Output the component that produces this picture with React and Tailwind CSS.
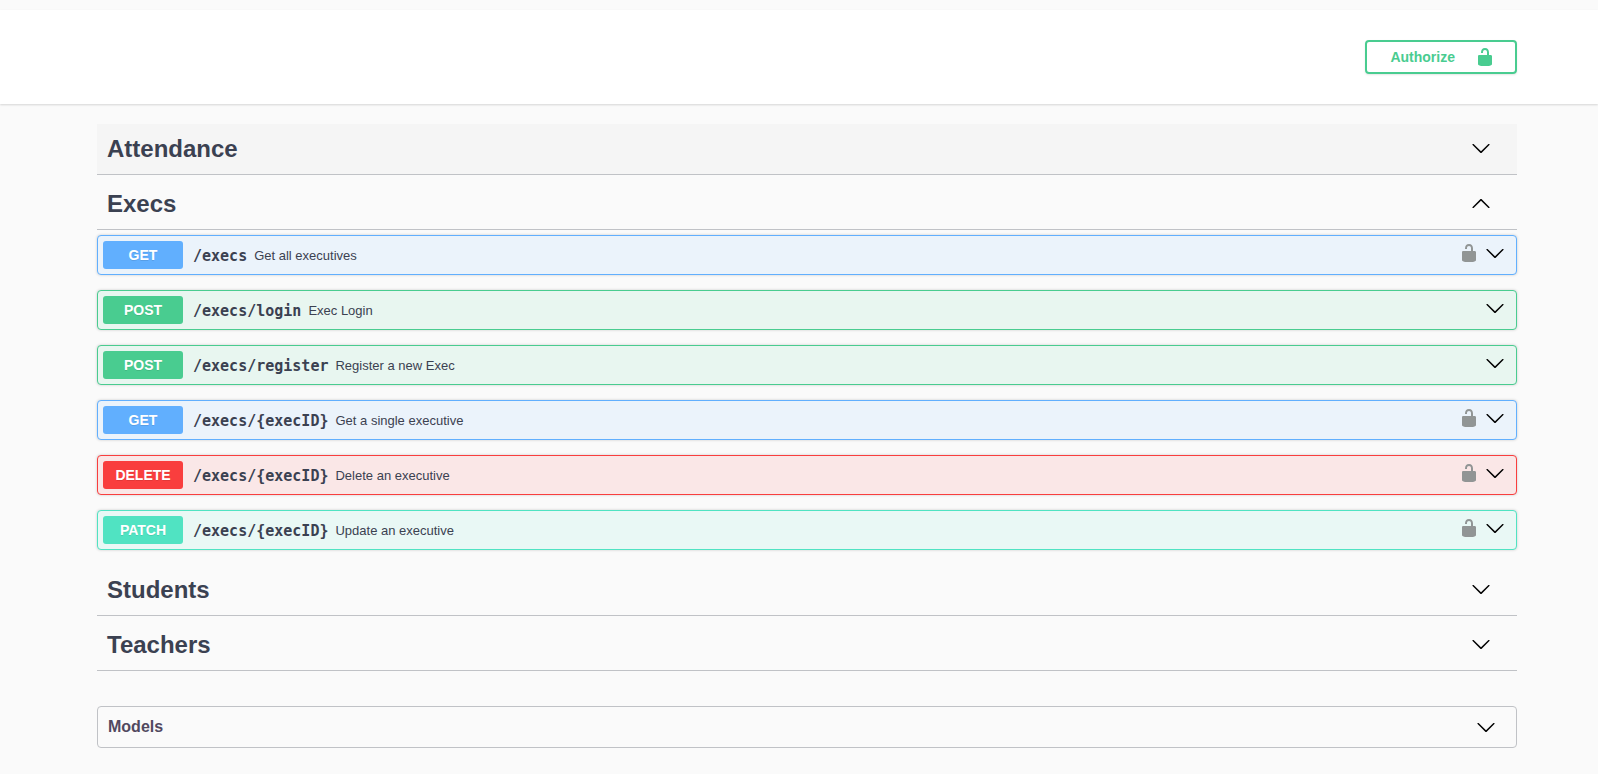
import { useState } from 'react';
import clsx from 'clsx';

const execOperations = [
  { method: 'GET', path: '/execs', summary: 'Get all executives', secured: true },
  { method: 'POST', path: '/execs/login', summary: 'Exec Login', secured: false },
  { method: 'POST', path: '/execs/register', summary: 'Register a new Exec', secured: false },
  { method: 'GET', path: '/execs/{execID}', summary: 'Get a single executive', secured: true },
  { method: 'DELETE', path: '/execs/{execID}', summary: 'Delete an executive', secured: true },
  { method: 'PATCH', path: '/execs/{execID}', summary: 'Update an executive', secured: true },
];

const tags = [
  { name: 'Attendance', operations: [], highlighted: true },
  { name: 'Execs', operations: execOperations },
  { name: 'Students', operations: [] },
  { name: 'Teachers', operations: [] },
];

const methodStyles = {
  GET: { block: 'border-[#61affe] bg-[#ebf3fb]', badge: 'bg-[#61affe]' },
  POST: { block: 'border-[#49cc90] bg-[#e8f6f0]', badge: 'bg-[#49cc90]' },
  DELETE: { block: 'border-[#f93e3e] bg-[#fae7e7]', badge: 'bg-[#f93e3e]' },
  PATCH: { block: 'border-[#50e3c2] bg-[#e9f8f5]', badge: 'bg-[#50e3c2]' },
};

function UnlockedIcon({ className }) {
  return (
    <svg className={clsx('size-5 shrink-0', className)} viewBox="0 0 20 20" fill="currentColor" aria-hidden="true">
      <path d="M15.8 8H14V5.6C14 2.703 12.665 1 10 1 7.334 1 6 2.703 6 5.6V6h2v-.801C8 3.754 8.797 3 10 3c1.203 0 2 .754 2 2.199V8H4c-.553 0-1 .646-1 1.199V17c0 .549.428 1.139.951 1.307l1.197.387C5.672 18.861 6.55 19 7.1 19h5.8c.549 0 1.428-.139 1.951-.307l1.196-.387c.524-.167.953-.757.953-1.306V9.199C17 8.646 16.352 8 15.8 8z" />
    </svg>
  );
}

function Arrow({ up }) {
  return (
    <svg className="size-5 shrink-0 text-black" viewBox="0 0 20 20" fill="currentColor" aria-hidden="true">
      {up ? (
        <path d="M17.418 14.908c.272.268.709.268.979 0s.271-.701 0-.969l-7.908-7.83c-.27-.268-.707-.268-.979 0l-7.908 7.83c-.27.268-.27.701 0 .969.271.268.709.268.979 0L10 7.767l7.418 7.141z" />
      ) : (
        <path d="M17.418 6.109c.272-.268.709-.268.979 0s.271.701 0 .969l-7.908 7.83c-.27.268-.707.268-.979 0l-7.908-7.83c-.27-.268-.27-.701 0-.969.271-.268.709-.268.979 0L10 13.25l7.418-7.141z" />
      )}
    </svg>
  );
}

function Operation({ method, path, summary, secured }) {
  const styles = methodStyles[method];

  return (
    <div className={clsx('flex items-center rounded border p-[5px] pr-[11px] shadow-[0_0_3px_rgba(0,0,0,0.19)]', styles.block)}>
      <button type="button" className="flex min-w-0 flex-1 cursor-pointer items-center text-left">
        <span
          className={clsx(
            'w-20 shrink-0 rounded-[3px] text-center text-sm leading-7 font-bold text-white [text-shadow:0_1px_0_rgba(0,0,0,0.1)]',
            styles.badge
          )}
        >
          {method}
        </span>
        <span className="ml-2.5 pt-0.5 font-['DejaVu_Sans_Mono',monospace] text-[15px] leading-5 font-bold">{path}</span>
        <span className="ml-[7px] pt-0.5 text-[13px] leading-5">{summary}</span>
      </button>
      <div className="flex gap-1.5 pb-1">
        {secured && (
          <button type="button" aria-label="authorization button unlocked" className="cursor-pointer">
            <UnlockedIcon className="text-[#919595]" />
          </button>
        )}
        <button type="button" aria-label={`Expand ${method} ${path}`} className="cursor-pointer">
          <Arrow />
        </button>
      </div>
    </div>
  );
}

function TagSection({ name, operations, highlighted }) {
  const [open, setOpen] = useState(operations.length > 0);
  const showOperations = open && operations.length > 0;

  return (
    <section className={showOperations ? 'mb-[15px]' : 'mb-1'}>
      <div
        className={clsx(
          'flex h-[51px] items-center justify-between border-b border-[#c0c2c6] pr-[26px] pl-2.5',
          highlighted && 'bg-[#f5f5f5]'
        )}
      >
        <h3 className="text-2xl leading-8 font-bold">{name}</h3>
        <button
          type="button"
          aria-label={`Toggle ${name}`}
          aria-expanded={open}
          onClick={() => setOpen(!open)}
          className="cursor-pointer pb-[3px]"
        >
          <Arrow up={open} />
        </button>
      </div>
      {showOperations && (
        <div className="mt-[5px] flex flex-col gap-[15px]">
          {operations.map((op) => (
            <Operation key={`${op.method} ${op.path}`} {...op} />
          ))}
        </div>
      )}
    </section>
  );
}

export default function App() {
  return (
    <div className="min-h-screen bg-[#fafafa] pt-2.5 font-['Liberation_Sans',Arial,sans-serif] text-[#3b4151]">
      {/* Authorize bar */}
      <header className="bg-white py-[30px] pl-4 shadow-[0_1px_2px_rgba(0,0,0,0.15)]">
        <div className="mx-auto flex max-w-[1460px] justify-end px-5">
          <button
            type="button"
            className="flex cursor-pointer items-center rounded border-2 border-[#49cc90] py-[5px] pr-5 pl-[23px] text-sm font-bold text-[#49cc90] shadow-[0_1px_2px_rgba(0,0,0,0.1)]"
          >
            <span className="pr-5">Authorize</span>
            <UnlockedIcon />
          </button>
        </div>
      </header>

      <main className="pl-4">
        <div className="mx-auto max-w-[1460px] px-5 pt-5 pb-6">
          {tags.map((tag) => (
            <TagSection key={tag.name} {...tag} />
          ))}

          {/* Models */}
          <section className="mt-[35px] rounded border border-[#c0c2c6]">
            <h4>
              <button
                type="button"
                aria-expanded={false}
                className="flex w-full cursor-pointer items-center justify-between py-2.5 pr-5 pl-2.5 text-left text-base leading-5 font-bold text-[#51495f]"
              >
                <span>Models</span>
                <Arrow />
              </button>
            </h4>
          </section>
        </div>
      </main>
    </div>
  );
}
